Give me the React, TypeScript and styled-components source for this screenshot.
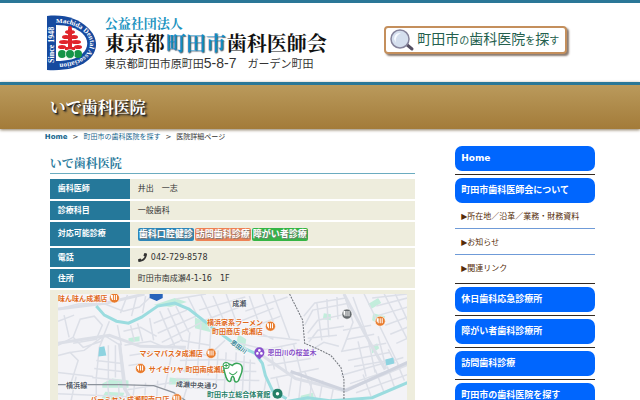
import React from "react";
import styled, { createGlobalStyle } from "styled-components";
import { FaPhone } from "react-icons/fa";

const sans = `"DejaVu Sans", "Noto Sans CJK JP", sans-serif`;
const gothic = `"Liberation Sans", "Noto Sans CJK JP", sans-serif`;
const mincho = `"Noto Serif CJK JP", "Noto Sans CJK JP", serif`;

const GlobalStyle = createGlobalStyle`
  * { box-sizing: border-box; }
  body {
    margin: 0;
    overflow: hidden;
    background: #fff;
    color: #333;
    font: 8px/12px ${sans};
  }
  a { text-decoration: none; color: inherit; }
  h1, h2, p, ul, ol { margin: 0; padding: 0; }
  ul, ol { list-style: none; }
`;

const Header = styled.header`
  border-top: 3px solid #2a7797;
  height: 82px;
`;
const Container = styled.div`
  width: 86%;
  margin: 0 auto;
`;
const HeaderRow = styled(Container)`
  display: flex;
  justify-content: space-between;
  align-items: flex-start;
  padding: 12px 28px 0 2px;
`;
const Brand = styled.a`
  display: flex;
  gap: 8px;
`;
const BrandText = styled.div`
  white-space: nowrap;
`;
const Corporate = styled.p`
  font: 700 13px/16px ${mincho};
  color: #1b93c0;
`;
const Society = styled.p`
  display: flex;
  gap: 1px;
  font: 700 20px/24px ${mincho};
  color: #111;
`;
const City = styled.span`
  color: #148cc6;
  text-shadow: 1px 1px 1px #567;
`;
const Address = styled.p`
  font: 11px/16px ${gothic};
  color: #333;
`;
const Digits = styled.span`
  font-size: 14px;
`;
const SearchButton = styled.a`
  display: flex;
  align-items: center;
  gap: 2px;
  height: 28px;
  margin-top: 11px;
  padding: 0 6px 0 2px;
  border: 2px solid #c48f5c;
  border-radius: 4px;
  background: #fff;
  box-shadow: 2px 2px 2px #8a7a70;
  font: 14px/20px ${gothic};
  color: #245f4e;
  white-space: nowrap;
`;
const Kana = styled.span`
  font-size: 10px;
`;

const TitleBar = styled.div`
  border-top: 3px solid #2a7797;
  background: linear-gradient(#ba9a5c, #a37b39);
  box-shadow: 0 1px 3px #8a7a60;
`;
const PageTitle = styled.h1`
  padding: 11px 0 11px 5px;
  font: 700 16px/22px ${mincho};
  color: #fff;
  text-shadow: 1px 1px 1px #222, 2px 2px 2px #333;
`;
const Crumbs = styled.ol`
  display: flex;
  gap: 5px;
  padding-top: 2px;
  font-size: 7px;
  line-height: 12px;
`;
const Crumb = styled.li<{ $bold?: boolean }>`
  font-weight: ${(p) => (p.$bold ? 700 : 400)};
  & a { color: #17658c; }
  &:not(:first-child)::before {
    content: ">";
    margin-right: 5px;
    font-weight: 400;
  }
`;

const Columns = styled(Container)`
  display: grid;
  grid-template-columns: minmax(0, 1fr) 140px;
  column-gap: 40px;
  align-items: start;
`;
const Main = styled.main`
  padding: 11px 0 0 5px;
`;
const ClinicName = styled.h2`
  padding-bottom: 1px;
  border-bottom: 1px solid #6bacc0;
  font: 700 12px/18px ${mincho};
  color: #2a7a9c;
`;
const Details = styled.table`
  width: 100%;
  margin-top: 5px;
  border-collapse: collapse;
  & tr { border-bottom: 2px solid #fff; }
`;
const Label = styled.th`
  width: 80px;
  padding: 0 8px;
  background: #25789a;
  color: #fff;
  text-align: left;
`;
const Value = styled.td<{ $tall?: boolean }>`
  height: ${(p) => (p.$tall ? 26 : 21)}px;
  padding: 0 8px;
  background: #eeeddd;
`;
const MapCell = styled.td`
  padding: 4px 8px 0;
  background: #eeeddd;
  & svg { display: block; width: 100%; }
`;
const Inline = styled.span`
  display: flex;
  align-items: center;
  gap: 4px;
`;
const Badges = styled.ul`
  display: flex;
  gap: 1px;
`;
const Badge = styled.li<{ $color: string }>`
  padding: 0 1px;
  border-radius: 2px;
  background: ${(p) => p.$color};
  color: #fff;
  font-size: 9px;
  font-weight: 700;
  line-height: 13px;
  text-shadow: 1px 1px 1px #777;
`;

const Side = styled.nav`
  padding-top: 3px;
`;
const Group = styled.div`
  padding-bottom: 3px;
  & + & {
    border-top: 1px solid #332a22;
    padding-top: 3px;
  }
`;
const NavButton = styled.a`
  display: block;
  padding: 0 6px;
  border-radius: 7px;
  background: #0066fe;
  color: #fff;
  font-size: 9px;
  font-weight: 700;
  line-height: 25px;
`;
const SubLink = styled.a`
  display: block;
  padding: 2px 6px 0;
  color: #552c08;
  line-height: 23px;
`;
const SubList = styled.ul`
  & li + li { border-top: 1px solid #6f9bd8; }
`;

const Emblem = () => (
  <svg width="50" height="56" viewBox="0 0 50 56" role="img" aria-label="Machida Dental Association">
    <path d="M0 1C18-1 31 4 40 12c12 11 12 24 0 34C31 53 18 56 0 55Z" fill="#164a9f" />
    <path d="M9 10c12 0 20 3 26 8 7 6 7 15 0 21-6 5-14 7-26 7Z" fill="#fff" />
    <path id="emblem-arc" d="M9 8C20 7 30 11 37 17C45 24 45 33 37 41C29 47 18 49 7 49" fill="none" />
    <path id="emblem-side" d="M7 50V9" fill="none" />
    <g fill="#fff" fontFamily='"Liberation Serif", serif' fontWeight="700">
      <text fontSize="7">
        <textPath href="#emblem-arc">Machida Dental Association</textPath>
      </text>
      <text fontSize="8">
        <textPath href="#emblem-side" startOffset="2">Since 1948</textPath>
      </text>
    </g>
    <g fill="#e0242b">
      <circle cx="23" cy="13" r="2" />
      <ellipse cx="23" cy="17" rx="5" ry="2" />
      <ellipse cx="19" cy="22" rx="4" ry="2" />
      <ellipse cx="27" cy="22" rx="4" ry="2" />
      <ellipse cx="17" cy="27" rx="5" ry="2" />
      <ellipse cx="29" cy="27" rx="5" ry="2" />
      <ellipse cx="15" cy="32" rx="4" ry="2" />
      <ellipse cx="31" cy="32" rx="4" ry="2" />
      <path d="M21 14h4v22h-4zM18 32h10v3H18z" />
    </g>
    <g fill="#159447">
      <circle cx="15" cy="39" r="4" />
      <circle cx="31" cy="39" r="4" />
      <circle cx="23" cy="39" r="4.5" stroke="#fff" strokeWidth=".7" />
    </g>
  </svg>
);

const Magnifier = () => (
  <svg width="27" height="24" viewBox="0 0 27 24" aria-hidden="true">
    <path d="m18 16 6 5" stroke="#554f62" strokeWidth="3" strokeLinecap="round" />
    <circle cx="12" cy="11" r="9" fill="#d5dfee" stroke="#85839b" strokeWidth="1.5" />
    <path d="M6 11a6 6 0 0 1 7-6c-4 2-6 5-5 10Z" fill="#f8fbff" />
  </svg>
);

const minorRoads = [
  "M59 309l20-5 24-1M59 345l15-8 7-18 14-3 8 9-6 14-23 4M74 337l10 10 18-6 8-20M59 355l12-3 8 8-7 22M71 352l14-2 20-15",
  "M105 335l-5 12-3 30M97 360l26 3M95 368l27 3M93 377l29 3M109 345v33M116 345v32M105 335l16 10 4 30 3 25",
  "M125 345l26-4 14 6 15-6M130 355l25-4M129 365l14-2M122 345l-4-20M124 331l17-4 16 9M131 325l4 16M138 323l5 18M150 318l4 22",
  "M160 311l15 35M168 308l15 33M176 306l13 26M154 323l33-13M158 333l38-17M162 342l40-20M143 313l3-17M132 316l5-20M121 313l7-18",
  "M103 303l21 8 16-4 14-13M59 321l16-6M65 315l5 22M59 372l35 4M77 376l-5 24M97 378v22M108 380l2 20M119 382l1 18M59 393l70 3",
  "M176 299l30-5M188 297l10 20M201 295l12 26M213 296l14 32M226 294l13 36M199 310l46-13M205 320l42-16M230 325l43-17M235 334l45-18",
  "M249 296l12 34M262 294l11 28M273 295l16 43M245 311l42-14M225 340l-14 13M180 340l30 5M177 347l30 8M190 332l-5 40M201 324l-4 51M211 327l-3 48",
  "M180 360l42-1 33 4M178 370l78 1M176 378l83 2M218 350l-2 36M226 352l-2 40M236 352l-2 42M244 355l-2 39M250 359l-1 36M173 348l-8 40",
  "M239 343l26 6 31-6M256 335l43 5M249 328l24 11M270 349l4 20M281 347l5 24M293 344l8 31M267 365l43-7M270 378l48-10M304 371l12 29",
  "M303 316l11-13 31-5M304 325l8-15 37-7M307 333l10-13 28-6M308 342l9-12 26-4M310 350l13-8 15 4M307 338l29-3M316 302l5 38M326 299l2 38M336 297l1 22",
  "M343 294l9 28-11 29M352 297l18 50M363 294l34 70M371 298l35-4M375 306l31-8M378 315l28-8M384 325l22-8M389 334l17-7M395 343l11-5",
  "M383 294l23 45M394 294l12 26M342 330l28-5M346 339l27-5M340 351l45-8M347 360l41-8M353 366l40-7M357 341l8 35M367 339l7 33M377 336l8 32M387 349l7 14",
  "M340 375l62-18M349 383l57-19M355 392l51-18M362 374l8 22M374 369l9 23M386 366l7 20M396 363l7 17M292 371l-4 25M301 374l-3 26M311 378l-2 22M322 380l-3 17M333 385l-3 15",
  "M183 400l4-13 23 1M214 386l-4 14M232 389l-2 11M266 377l-4 23M276 377l3 12M128 389l44-7M135 384l-2 16M146 382l-1 18M158 380l-1 18",
];

const pins: Array<[number, number, string]> = [
  [115, 298, "#e87b2d"], [270, 326, "#e87b2d"], [211, 353, "#e87b2d"], [141, 368, "#e87b2d"],
  [177, 398, "#e87b2d"], [379, 321, "#e87b2d"], [346, 314, "#64696d"],
];

const places: Array<[number, number, string, string]> = [
  [59, 301, "味ん味ん成瀬店", "#df6a1d"],
  [207, 325, "横浜家系ラーメン", "#df6a1d"],
  [212, 334, "町田商店 成瀬店", "#df6a1d"],
  [140, 356, "マシマパスタ成瀬店", "#df6a1d"],
  [149, 371, "サイゼリヤ 町田南成瀬店", "#df6a1d"],
  [91, 401, "バーミヤン 成瀬駅南口店", "#df6a1d"],
  [267, 355, "恩田川の桜並木", "#8850c7"],
  [207, 396, "町田市立総合体育館", "#258069"],
];

const AreaMap = () => (
  <svg viewBox="59 294 347 110" role="img" aria-label="地図">
    <path d="M59 294h347v110H59z" fill="#f3f3f7" />
    <g fill="#c3eddc">
      <path d="M103 383l10-5 16 2v7h-26zM106 391l19 1-3 7-20-1zM129 338l11-2v5l-11 1zM195 317l12 6 4 9-16-4zM238 334l8 5-2 13-9-3zM154 305l21-7 12 4-16 5zM323 313l7 1v6l-8-1zM367 304l10-6 3 5-10 6zM372 313l12 3-3 10-10-6zM370 347l6-4 2 5-7 5zM300 395l12-3 2 8h-14zM170 377l20 2-3 5h-18z" />
    </g>
    <g fill="none" stroke="#dcdfe7" strokeWidth="1.5">
      {minorRoads.map((d) => <path key={d} d={d} />)}
      <path strokeWidth="3" d="M59 343l25-4 26-4 31 11 45 1M120 343l5 45 8 12M343 294l20 38 21 37M256 351l39 27 48 12 63-26M59 309l48-6 38-9" />
      <path stroke="#cfd3de" strokeWidth="3" d="M290 371l55 19 61-28" />
    </g>
    <g fill="none" stroke="#9bdcdf" strokeWidth="3">
      <path d="M97 306l8 9 12 6 12 2 13-6 16-11 17-3 14 6 18 14 28 21 20 9 7 10 3 12 7 15 14 8" />
      <path d="M285 401l22-4 22 3 16-1 26-2 35-15" />
    </g>
    <path d="M100 347l5-1 2 9-8 1zM384 359l8-2 1 6-8 2z" fill="#8ed3e0" />
    <path d="M59 384h61l34 1 20 7 12 8" fill="none" stroke="#8c929b" strokeWidth="1.2" />
    <path d="M289 294l7 14 6 12 2 23 14 6 12 6 10 12 3 12v21" fill="none" stroke="#70747b" strokeWidth="1" strokeDasharray="2 1" />
    <path d="M150 294h13v4l-6 3-7-3z" fill="#2864bb" />
    <g fontFamily='"Noto Sans CJK JP", sans-serif' fontSize="7" stroke="#fff" strokeWidth="1" paintOrder="stroke" fontWeight="700">
      {places.map(([x, y, name, color]) => <text key={name} x={x} y={y} fill={color}>{name}</text>)}
      <g fill="#555c68">
        <text x="232" y="306">成瀬</text>
        <text x="67" y="387">横浜線</text>
        <text x="176" y="386" transform="rotate(3 176 386)">成瀬中央通り</text>
        <text x="230" y="343" fill="#328494" transform="rotate(36 230 343)" fontSize="6">恩田川</text>
      </g>
    </g>
    {pins.map(([x, y, color]) => (
      <g key={`${x}-${y}`}>
        <circle cx={x} cy={y} r="5" fill={color} stroke="#fff" strokeWidth=".6" />
        <path d={`M${x - 2} ${y - 3}v5m0-2h-1v-3m3 0v5m2-5v5`} fill="none" stroke="#fff" strokeWidth="1" />
      </g>
    ))}
    <circle cx="259" cy="352" r="5" fill="#8950cd" />
    <path d="M255 355h8l-4 4z" fill="#8950cd" />
    <g fill="#fff">
      <circle cx="259" cy="350" r="1.3" />
      <circle cx="257" cy="353" r="1.3" />
      <circle cx="261" cy="353" r="1.3" />
    </g>
    <circle cx="277" cy="393" r="5" fill="#258069" />
    <circle cx="277" cy="393" r="1.7" fill="#fff" />
    <path d="M232 365c4-4 10-2 10 3 0 5-2 7-3 10-1 4-5 5-5 0-1-3-2-3-3 0 0 4-3 4-5-1-1-4-3-8-2-11 2-3 5-3 8-1Z" fill="#fff" stroke="#37a557" strokeWidth="1.5" />
    <path d="M229 372c3 3 5 3 8-1" fill="none" stroke="#37a557" />
    <circle cx="226" cy="365" r="3" fill="#fff" stroke="#37a557" />
    <path d="M226 363v4m-2-2h4" stroke="#37a557" />
  </svg>
);

const badges = [
  { name: "歯科口腔健診", color: "#2d86b8" },
  { name: "訪問歯科診療", color: "#ee8255" },
  { name: "障がい者診療", color: "#35b544" },
];

const menu: Array<{ title: string; links?: string[] }> = [
  { title: "Home" },
  { title: "町田市歯科医師会について", links: ["所在地／沿革／業務・財務資料", "お知らせ", "関連リンク"] },
  { title: "休日歯科応急診療所" },
  { title: "障がい者歯科診療所" },
  { title: "訪問歯科診療" },
  { title: "町田市の歯科医院を探す" },
];

export default function App() {
  return (
    <>
      <GlobalStyle />
      <Header>
        <HeaderRow>
          <Brand href="#">
            <Emblem />
            <BrandText>
              <Corporate>公益社団法人</Corporate>
              <Society>東京都<City>町田市</City>歯科医師会</Society>
              <Address>東京都町田市原町田<Digits>5-8-7</Digits>　ガーデン町田</Address>
            </BrandText>
          </Brand>
          <SearchButton href="#">
            <Magnifier />
            <span>町田市<Kana>の</Kana>歯科医院<Kana>を</Kana>探<Kana>す</Kana></span>
          </SearchButton>
        </HeaderRow>
      </Header>
      <TitleBar>
        <Container><PageTitle>いで歯科医院</PageTitle></Container>
      </TitleBar>
      <Container>
        <Crumbs>
          <Crumb $bold><a href="#">Home</a></Crumb>
          <Crumb><a href="#">町田市の歯科医院を探す</a></Crumb>
          <Crumb>医院詳細ページ</Crumb>
        </Crumbs>
      </Container>
      <Columns>
        <Main>
          <ClinicName>いで歯科医院</ClinicName>
          <Details>
            <tbody>
              <tr><Label scope="row">歯科医師</Label><Value>井出　一志</Value></tr>
              <tr><Label scope="row">診療科目</Label><Value>一般歯科</Value></tr>
              <tr>
                <Label scope="row">対応可能診療</Label>
                <Value $tall>
                  <Badges>{badges.map((b) => <Badge key={b.name} $color={b.color}>{b.name}</Badge>)}</Badges>
                </Value>
              </tr>
              <tr><Label scope="row">電話</Label><Value><Inline><FaPhone size={9} />042-729-8578</Inline></Value></tr>
              <tr><Label scope="row">住所</Label><Value>町田市南成瀬4-1-16　1F</Value></tr>
              <tr><MapCell colSpan={2}><AreaMap /></MapCell></tr>
            </tbody>
          </Details>
        </Main>
        <Side>
          {menu.map((group) => (
            <Group key={group.title}>
              <NavButton href="#">{group.title}</NavButton>
              {group.links && (
                <SubList>
                  {group.links.map((link) => <li key={link}><SubLink href="#">▶{link}</SubLink></li>)}
                </SubList>
              )}
            </Group>
          ))}
        </Side>
      </Columns>
    </>
  );
}
